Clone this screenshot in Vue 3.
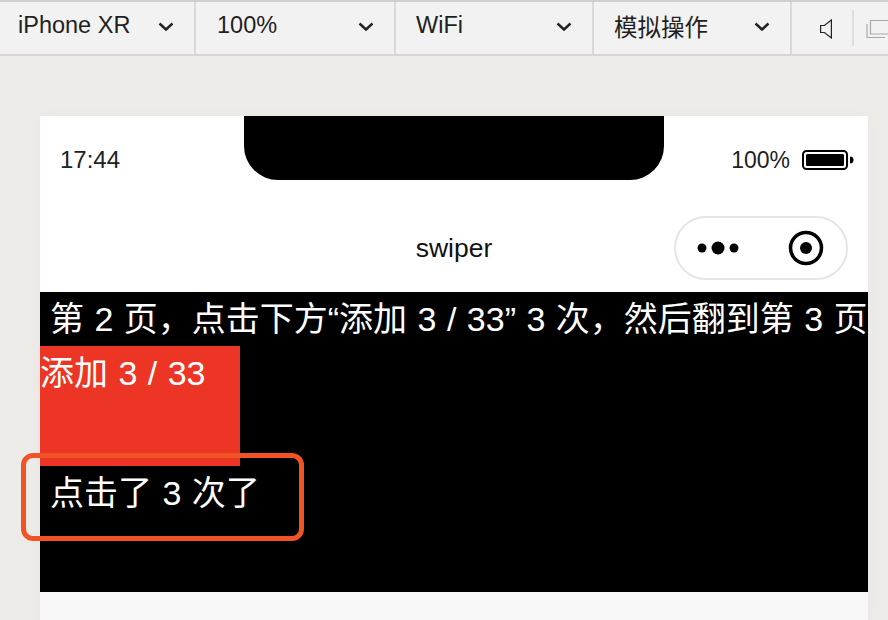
<template>
  <div class="devtool">
    <header class="toolbar">
      <div v-for="item in selects" :key="item.label" class="select" :style="{ width: item.width + 'px', paddingLeft: item.pad + 'px' }">
        <span>{{ item.label }}</span>
        <svg class="chevron" viewBox="0 0 16 10" fill="none" stroke="currentColor" stroke-width="2.4">
          <path d="M1.500 1.500l6.500 6 6.500-6" />
        </svg>
      </div>
      <div class="tools">
        <svg class="sound" viewBox="0 0 12 20" fill="none" stroke="#222" stroke-width="1.2">
          <path d="M.6 6.500h3.800L11.400 1v18L4.400 13.500H.6z" />
        </svg>
        <i class="tool-sep"></i>
        <svg class="windows" viewBox="0 0 24 20" fill="none" stroke="#aaa" stroke-width="1.2">
          <path d="M5.500 1.500H24V15H5.500z" />
          <path d="M2 5v13.500h18" />
        </svg>
      </div>
    </header>

    <main class="stage">
      <div class="phone">
        <div class="status-bar">
          <span class="time">17:44</span>
          <div class="notch"></div>
          <div class="battery-wrap">
            <span>100%</span>
            <svg class="battery" viewBox="0 0 52 20">
              <rect x="1" y="1" width="44" height="18" rx="3.500" fill="none" stroke="#000" stroke-width="2" />
              <rect x="4" y="4" width="38" height="12" rx="1.500" fill="#000" />
              <path d="M48 6.500c2.500 0 3.500 1.500 3.500 3.500s-1 3.500-3.500 3.500z" fill="#000" />
            </svg>
          </div>
        </div>

        <nav class="nav-bar">
          <span class="nav-title">swiper</span>
          <div class="capsule">
            <svg class="dots" viewBox="0 0 44 14" fill="#000">
              <circle cx="5" cy="7" r="4.500" />
              <circle cx="21" cy="7" r="6.500" />
              <circle cx="37" cy="7" r="4.500" />
            </svg>
            <svg class="target" viewBox="0 0 36 36">
              <circle cx="18" cy="18" r="15.500" fill="none" stroke="#000" stroke-width="3.500" />
              <circle cx="18" cy="18" r="6" fill="#000" />
            </svg>
          </div>
        </nav>

        <section class="page">
          <p class="line intro">第 2 页，点击下方“添加 3 / 33” 3 次，然后翻到第 3 页</p>
          <div class="add-btn">添加 3 / 33</div>
          <p class="line count">点击了 3 次了</p>
          <div class="highlight"></div>
        </section>

        <div class="rest"></div>
      </div>
    </main>
  </div>
</template>

<script setup>
const selects = [
  { label: 'iPhone XR', width: 196, pad: 18 },
  { label: '100%', width: 200, pad: 21 },
  { label: 'WiFi', width: 198, pad: 20 },
  { label: '模拟操作', width: 198, pad: 20 },
]
</script>

<style>
html,
body {
  margin: 0;
  overflow: hidden;
}
</style>

<style scoped>
.devtool {
  width: 888px;
  height: 620px;
  overflow: hidden;
  display: flex;
  flex-direction: column;
  background: #ecebe7;
  color: #1f1f1f;
  font-family: "Liberation Sans", "Noto Sans CJK SC", sans-serif;
}

.toolbar {
  height: 56px;
  box-sizing: border-box;
  flex: none;
  display: flex;
  background: #f2f2f2;
  border-top: 2px solid #cecece;
  border-bottom: 2px solid #d6d6d6;
}

.select {
  box-sizing: border-box;
  flex: none;
  display: flex;
  align-items: center;
  justify-content: space-between;
  padding: 0 20px 3px 18px;
  font-size: 23.500px;
  border-right: 2px solid #d9d9d9;
}

.select span {
  position: relative;
  top: -1px;
}

.chevron {
  width: 16px;
  height: 10px;
  color: #222;
}

.tools {
  display: flex;
  align-items: center;
  padding-left: 28px;
}

.sound {
  width: 12px;
  height: 20px;
  position: relative;
  top: 1px;
}

.tool-sep {
  width: 2px;
  height: 36px;
  margin-left: 20px;
  background: #dedede;
}

.windows {
  width: 24px;
  height: 20px;
  margin-left: 11px;
  position: relative;
  top: 1px;
}

.stage {
  flex: 1;
  padding: 60px 20px 0 40px;
}

.phone {
  width: 828px;
  height: 504px;
  display: flex;
  flex-direction: column;
  background: #fff;
  box-shadow: 0 0 16px rgba(0, 0, 0, 0.02);
}

.status-bar {
  height: 88px;
  flex: none;
  position: relative;
  display: flex;
  align-items: center;
  justify-content: space-between;
  padding: 0 14px 0 20px;
  font-size: 24px;
  color: #222;
}

.notch {
  position: absolute;
  left: 204px;
  top: 0;
  width: 420px;
  height: 64px;
  background: #000;
  border-radius: 0 0 34px 34px;
}

.battery-wrap {
  display: flex;
  align-items: center;
  gap: 12px;
  font-size: 23px;
}

.battery {
  width: 52px;
  height: 20px;
}

.nav-bar {
  height: 88px;
  flex: none;
  position: relative;
  display: flex;
  align-items: center;
  justify-content: center;
}

.nav-title {
  font-size: 26.500px;
  color: #111;
}

.capsule {
  position: absolute;
  left: 634px;
  top: 12px;
  width: 174px;
  box-sizing: border-box;
  height: 64px;
  border: 2px solid #e5e5e5;
  border-radius: 32px;
  display: flex;
  align-items: center;
  padding-left: 21px;
}

.dots {
  width: 44px;
  height: 14px;
}

.target {
  width: 36px;
  height: 36px;
  margin-left: 47px;
}

.page {
  height: 300px;
  flex: none;
  position: relative;
  background: #000;
  color: #fff;
  font-size: 34px;
  line-height: 54px;
  word-spacing: 1px;
}

.line {
  margin: 0;
  padding-left: 10px;
  white-space: nowrap;
}

.add-btn {
  width: 200px;
  height: 120px;
  background: #ec3524;
}

.highlight {
  position: absolute;
  left: -19px;
  top: 161px;
  width: 273px;
  height: 78px;
  border: 5px solid #f05426;
  border-radius: 12px;
}

.rest {
  flex: 1;
  background: #f8f8f8;
}
</style>
